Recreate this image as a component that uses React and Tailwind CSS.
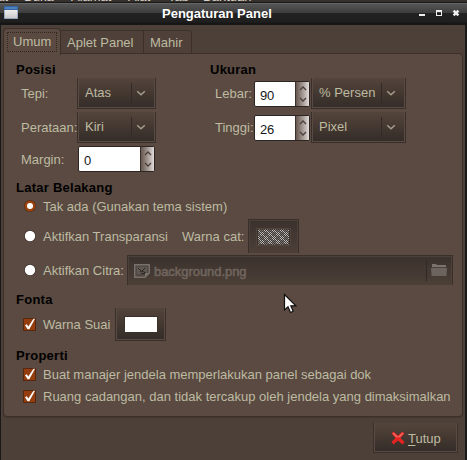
import React from "react";

const ink = "text-[#bdbba1]";

function Label({ className = "", children }) {
  return <span className={`shrink-0 whitespace-pre text-[13px] leading-4 ${ink} ${className}`}>{children}</span>;
}

function Heading({ className = "", children }) {
  return <h2 className={`h-4 whitespace-pre text-[13px] font-bold leading-4 tracking-[0.25px] text-black ${className}`}>{children}</h2>;
}

const raised =
  "shrink-0 border border-t-0 border-[#3a302b] bg-linear-to-b from-[#54453c] via-[#443831] to-[#332c28] shadow-[inset_1px_-1px_0_#594b43,inset_-1px_0_0_#594b43]";
const sunken =
  "shrink-0 border border-b-0 border-[#3a302b] bg-linear-to-b from-[#3b312d] to-[#4c4037] shadow-[inset_1px_1px_0_#4d4039,inset_-1px_0_0_#4d4039]";

function Combo({ className, text }) {
  return (
    <button className={`flex h-[31px] items-center pl-[7px] pr-[9px] ${raised} ${className}`}>
      <Label className="flex-1 text-left">{text}</Label>
      <span className="mr-[4px] h-5 w-px bg-[#322a26]" />
      <svg width="10" height="7" viewBox="0 0 10 7" fill="none" stroke="#a39d8b" strokeWidth="1.5">
        <path d="M1.2 1.2L5 4.8L8.8 1.2" />
      </svg>
    </button>
  );
}

function Spin({ className, value }) {
  return (
    <div className={`flex h-[26px] shrink-0 overflow-hidden rounded-[2px] border border-[#2d2522] bg-white ${className}`}>
      <span className="flex-1 pl-[5px] pt-[6px] text-[13px] leading-4 tracking-[-0.2px] text-[#181818]">{value}</span>
      <div className="flex w-[14px] flex-col items-center justify-between border-l border-[#3a302b] bg-linear-to-r from-[#66574f] to-[#e2dcda] py-[4px]">
        <svg width="8" height="5" viewBox="0 0 8 5" fill="none" stroke="#4b3f3a" strokeWidth="1.3">
          <path d="M1 4L4 1L7 4" />
        </svg>
        <svg width="8" height="5" viewBox="0 0 8 5" fill="none" stroke="#4b3f3a" strokeWidth="1.3">
          <path d="M1 1L4 4L7 1" />
        </svg>
      </div>
    </div>
  );
}

function Radio({ on }) {
  return (
    <svg className="ml-2 mr-[7px] shrink-0" width="12" height="12" viewBox="0 0 12 12">
      <circle cx="6" cy="6" r="5.9" fill={on ? "#622c10" : "#3d322d"} />
      <circle cx="6" cy="6" r="5.2" fill={on ? "#9a4412" : "#ffffff"} />
      {on && <circle cx="6" cy="6" r="3" fill="#ffffff" />}
    </svg>
  );
}

function Check() {
  return (
    <svg className="ml-[7px] mr-[7px] shrink-0" width="13" height="13" viewBox="0 0 13 13">
      <rect width="13" height="13" fill="#58270f" />
      <rect x="1" y="1" width="11" height="11" fill="#943e10" />
      <path d="M2 7.2L3.8 6.2L5.3 8.4L10.5 .8L12 .8L6.3 11.2L4.6 11.2Z" fill="#fff" />
    </svg>
  );
}

function TitleBar() {
  return (
    <header className="flex h-[22px] bg-[linear-gradient(#777_0,#555_1px,#3d3d3d_10px,#222_10px,#1f1f1f_19px,#161616_20px)] pl-1">
      <svg className="mt-[3px]" width="14" height="13" viewBox="0 0 14 13">
        <defs>
          <linearGradient id="appBody" x1="0" y1="0" x2="0" y2="1">
            <stop offset="0" stopColor="#eee" />
            <stop offset="1" stopColor="#c9c9c9" />
          </linearGradient>
        </defs>
        <rect width="14" height="13" fill="#5c80ad" />
        <rect x=".5" y="4" width="13" height="8.5" fill="url(#appBody)" />
        <rect width="14" height="4" fill="#3465a4" />
        <rect x="1" y="1" width="12" height="2" fill="#4d80bd" />
      </svg>
      <h1 className="ml-[144px] mt-[3px] w-[255px] whitespace-pre text-[13px] font-bold leading-4 text-white">Pengaturan Panel</h1>
      <svg className="mt-[5px]" width="44" height="12" viewBox="0 0 44 12">
        <rect x="2" y="6" width="6" height="2" fill="#eee" />
        <path d="M19 2h6v6h-6zM20 4v3h4V4z" fill="#eee" fillRule="evenodd" />
        <path d="M36.6 2.6L41.4 7.4M41.4 2.6L36.6 7.4" stroke="#eee" strokeWidth="2.5" />
      </svg>
    </header>
  );
}

const tab = "border border-b-0 border-[#3b302a] whitespace-pre text-[13px] leading-4";

export default function App() {
  return (
    <div className="h-[460px] w-[467px] overflow-hidden bg-[#191919] font-['Liberation_Sans',Arial,sans-serif]">
      <div className="h-[3px] overflow-hidden border-b border-[#191919] bg-[#36302c]">
        <div className="-mt-[11px] flex whitespace-pre text-[13px] leading-4 text-[#d5d0c8]">
          <span className="-ml-[20px] w-[44px] shrink-0">Lihat</span>
          <span className="w-[47px]">Buka</span>
          <span className="w-[57px]">Alamat</span>
          <span className="w-[40px]">Alat</span>
          <span className="w-[35px]">Tab</span>
          <span>Bantuan</span>
        </div>
      </div>
      <TitleBar />
      <main className="ml-px flex h-[435px] w-[464px] flex-col bg-[#4d4038] pl-[2px] pr-[2px] pt-[2px]">
        <nav className="flex h-[27px] items-end">
          <div className={`${tab} relative -mb-px h-[27px] w-[58px] rounded-t-[4px] bg-[#5a4a41] p-[3px] ${ink}`}>
            <div className="h-[20px] border border-dotted border-[#33291f] pl-[5px] pt-px">Umum</div>
          </div>
          <div className={`${tab} h-[24px] w-[83px] border-l-0 bg-[#4f4139] pl-[6px] pt-[4px] ${ink}`}>Aplet Panel</div>
          <div className={`${tab} h-[24px] w-[48px] rounded-tr-[4px] border-l-0 bg-[#4f4139] pl-[6px] pt-[4px] ${ink}`}>Mahir</div>
        </nav>
        <section className="-mt-px flex h-[364px] flex-col rounded-b-[4px] rounded-tr-[4px] border border-[#3b302a] bg-[#5a4a41] pl-3 pt-[8px] shadow-[0_1px_0_#43372f]">
          <div className="flex h-[110px]">
            <div className="w-[194px]">
              <Heading>Posisi</Heading>
              <div className="flex items-center pl-[5px]">
                <Label className="w-[56px]">Tepi:</Label>
                <Combo className="w-[79px]" text="Atas" />
              </div>
              <div className="mt-[3px] flex items-center pl-[5px]">
                <Label className="w-[56px]">Perataan:</Label>
                <Combo className="w-[79px]" text="Kiri" />
              </div>
              <div className="mt-[3px] flex items-center pl-[5px]">
                <Label className="mt-[2px] w-[57px]">Margin:</Label>
                <Spin className="w-[77px]" value="0" />
              </div>
            </div>
            <div>
              <Heading>Ukuran</Heading>
              <div className="flex items-center pl-[5px]">
                <Label className="w-[39px]">Lebar:</Label>
                <Spin className="mr-px w-[56px]" value="90" />
                <Combo className="w-[95px]" text="% Persen" />
              </div>
              <div className="mt-[3px] flex items-center pl-[5px]">
                <Label className="w-[39px]">Tinggi:</Label>
                <Spin className="mr-px w-[56px]" value="26" />
                <Combo className="w-[95px]" text="Pixel" />
              </div>
            </div>
          </div>

          <Heading className="mt-2">Latar Belakang</Heading>
          <div className="flex h-5 items-center">
            <Radio on />
            <Label className="mt-[2px]">Tak ada (Gunakan tema sistem)</Label>
          </div>
          <div className="mt-[3px] flex h-[34px] items-center">
            <Radio />
            <Label className="mt-[2px] w-[139px]">Aktifkan Transparansi</Label>
            <Label className="mt-[2px] w-[66px]">Warna cat:</Label>
            <button className={`flex h-[34px] w-[51px] items-center justify-center ${sunken}`}>
              <svg width="35" height="18" viewBox="0 0 35 18">
                <defs>
                  <pattern id="dots" width="8" height="8" patternUnits="userSpaceOnUse">
                    <rect width="8" height="8" fill="#423c39" />
                    <path
                      d="M0 0h1v1H0zM2 0h1v1H2zM1 1h1v1H1zM3 1h1v1H3zM0 2h1v1H0zM2 2h1v1H2zM1 3h1v1H1zM3 3h1v1H3zM4 4h1v1H4zM6 4h1v1H6zM5 5h1v1H5zM7 5h1v1H7zM4 6h1v1H4zM6 6h1v1H6zM5 7h1v1H5zM7 7h1v1H7z"
                      fill="#bdb9b6"
                    />
                    <path
                      d="M4 0h1v1H4zM6 0h1v1H6zM5 1h1v1H5zM7 1h1v1H7zM4 2h1v1H4zM6 2h1v1H6zM5 3h1v1H5zM7 3h1v1H7zM0 4h1v1H0zM2 4h1v1H2zM1 5h1v1H1zM3 5h1v1H3zM0 6h1v1H0zM2 6h1v1H2zM1 7h1v1H1zM3 7h1v1H3z"
                      fill="#76716e"
                    />
                  </pattern>
                </defs>
                <rect x=".5" y=".5" width="34" height="17" fill="#463a34" stroke="#52433b" />
                <rect x="1" y="1" width="33" height="16" fill="#3a302c" />
                <rect x="2" y="1.5" width="31" height="15" fill="url(#dots)" />
              </svg>
            </button>
          </div>
          <div className="mt-[2px] flex h-[30px] items-center">
            <Radio />
            <Label className="mt-[2px] w-[84px]">Aktifkan Citra:</Label>
            <button className={`flex h-[30px] w-[326px] items-center pl-[6px] pr-[5px] ${sunken}`}>
              <svg width="16" height="14" viewBox="0 0 16 14">
                <path d="M.7 .7H15.3V9L11 13.3H.7Z" fill="#514842" stroke="#77706b" strokeWidth="1.4" />
                <path d="M3 3H13V10H3Z" fill="#605852" />
                <path d="M4 4L7 7M8 7L11 4M6 8L8 7L12 9M7 9.5H13" stroke="#2d2724" fill="none" />
                <path d="M11 13V9H15" fill="#77706b" />
              </svg>
              <span className="ml-[4px] mt-[2px] flex-1 text-left text-[13px] leading-4 tracking-[-0.05px] text-[#71665f] [-webkit-text-stroke:0.5px_#71665f]">
                background.png
              </span>
              <span className="mr-[4px] h-5 w-px bg-[#312925]" />
              <svg className="-mt-[2px]" width="16" height="13" viewBox="0 0 16 13">
                <path d="M1 5V1H5L6 2H15V5Z" fill="#7b736e" />
                <path d="M1 4.5H15" stroke="#4b423d" />
                <path d="M0 5H16L15.5 13H.5Z" fill="#6b635e" />
              </svg>
            </button>
          </div>

          <Heading className="mt-[7px]">Fonta</Heading>
          <div className="flex h-[33px] items-center">
            <Check />
            <Label className="w-[72px]">Warna Suai</Label>
            <button className={`flex h-[33px] w-[51px] items-center justify-center ${raised}`}>
              <span className="h-[17px] w-[34px] border border-[#3a302b] bg-white" />
            </button>
          </div>

          <Heading className="mt-[7px]">Properti</Heading>
          <div className="flex h-[21px] items-center">
            <Check />
            <Label>Buat manajer jendela memperlakukan panel sebagai dok</Label>
          </div>
          <div className="mt-px flex h-[21px] items-center">
            <Check />
            <Label>Ruang cadangan, dan tidak tercakup oleh jendela yang dimaksimalkan</Label>
          </div>
        </section>

        <footer className="mt-[6px] flex justify-end pr-[5px]">
          <button className={`flex h-[30px] w-[85px] items-center pl-[17px] ${raised}`}>
            <svg width="14" height="14" viewBox="0 0 14 14">
              <path d="M2.5 .5L7 4.5L11.5 .5L13.5 2.5L9.5 7L13.5 11L11.5 13.5L7 9.5L2.5 13.5L.5 11L4.5 7L.5 2.5Z" fill="#e52421" />
              <path d="M2.5 1.5L7 5.7L11.5 1.5L12.5 2.5L9 6.3H5L1.5 2.5Z" fill="#ef6a62" />
            </svg>
            <Label className="ml-[3px] mt-[2px]">
              <span className="underline underline-offset-2">T</span>utup
            </Label>
          </button>
        </footer>
      </main>

      <svg className="fixed left-[283px] top-[293px]" width="15" height="21" viewBox="0 0 15 21">
        <path d="M1.5 1.5V17L5 13.8L7.5 19.5L10.2 18.3L7.8 12.8H12.8Z" fill="#fff" stroke="#111" strokeWidth="1.2" />
      </svg>
    </div>
  );
}
